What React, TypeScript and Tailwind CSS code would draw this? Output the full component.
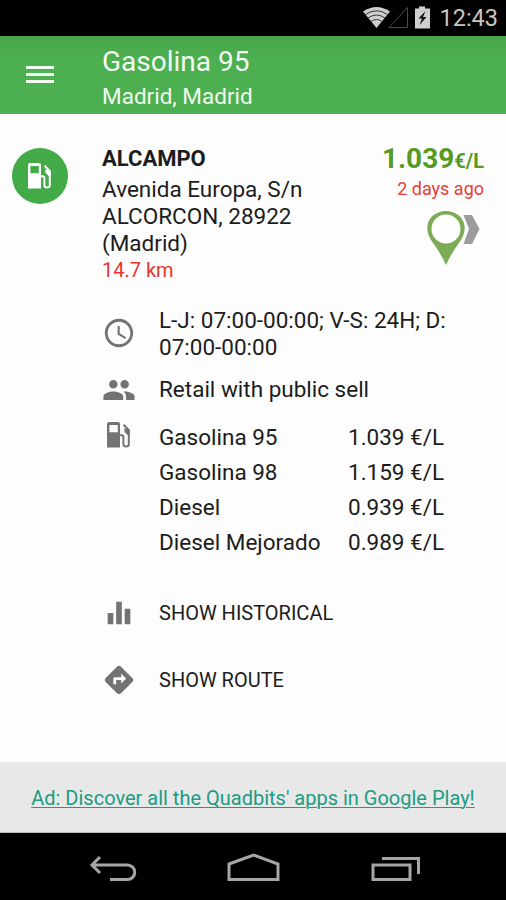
import { ReactNode } from "react";
import { MdPeople, MdSchedule, MdEqualizer, MdDirections } from "react-icons/md";

function Pump({ className }: { className: string }) {
  return (
    <svg viewBox="0 0 24 26" className={className} fill="currentColor">
      <path fillRule="evenodd" d="M2 0H11Q13 0 13 2V25.5H0V2Q0 0 2 0ZM2.4 3V10.2H10.8V3Z" />
      <path d="M13 13.3H14.8Q16.4 13.3 16.4 15V22Q16.4 24.6 19 24.6Q21.8 24.6 21.8 22V8.2L16.6 2.8" fill="none" stroke="currentColor" strokeWidth="2" />
      <path d="M17.2 6.2L22.6 8V13H20.6L17.6 10Z" />
    </svg>
  );
}

function Row({ icon, className, children }: { icon: ReactNode; className: string; children: ReactNode }) {
  return (
    <div className={`flex items-start ${className}`}>
      <div className="flex w-[57px] shrink-0 text-[#737373]">{icon}</div>
      {children}
    </div>
  );
}

const fuels = [
  ["Gasolina 95", "1.039 €/L"],
  ["Gasolina 98", "1.159 €/L"],
  ["Diesel", "0.939 €/L"],
  ["Diesel Mejorado", "0.989 €/L"],
];

export default function App() {
  return (
    <div className="flex h-[900px] w-[506px] flex-col overflow-hidden bg-[#fdfdfd] font-['Roboto',sans-serif] text-[#1c1c1c]">
      <div className="flex h-9 shrink-0 items-center justify-end bg-black pr-2 text-[#c6c6c6]">
        <svg width="72" height="36" viewBox="0 0 72 36" className="mr-[6px]">
          <path d="M2 11.5Q15.500 2.500 29 11.500L15.500 28Z" fill="#cfcfcf" />
          <g fill="none" stroke="#333" strokeWidth="1">
            <path d="M4.500 14.500Q15.500 7 26.500 14.500M7 18Q15.500 12 24 18M10 21.500Q15.500 17.500 21 21.500" />
          </g>
          <path d="M28 27.500H46.500V7.500Z" fill="none" stroke="#4a4a4a" />
          <path d="M54 8.500H58V6.500H64V8.500H69V28.500H54Z" fill="#cfcfcf" />
          <path d="M64.500 11L57.500 18.500H61L58.500 25L65.500 17H62Z" fill="#111" />
        </svg>
        <span className="text-[23.500px] leading-9">12:43</span>
      </div>

      <header className="flex h-[78px] shrink-0 bg-[#4caf50] bg-linear-to-b from-[#48a44b] to-[#4caf50] to-30% text-[#f1faf1]">
        <div className="flex w-[102px] flex-col gap-1 pt-[30px] pl-[26px]">
          <i className="h-[3px] w-[28px] bg-current" />
          <i className="h-[3px] w-[28px] bg-current" />
          <i className="h-[3px] w-[28px] bg-current" />
        </div>
        <div className="pt-2">
          <h1 className="text-[28px] leading-9">Gasolina 95</h1>
          <p className="text-[22.500px] leading-8">Madrid, Madrid</p>
        </div>
      </header>

      <main className="flex h-[648px] shrink-0 flex-col">
        <section className="flex h-[193px] shrink-0 pt-[30px] pr-[22px]">
          <div className="w-[102px] pt-1 pl-3">
            <div className="flex size-14 items-center justify-center rounded-full bg-[#42ab47] text-white">
              <Pump className="h-[26px] w-6" />
            </div>
          </div>
          <div className="flex-1">
            <h2 className="mb-[2px] text-[22px] leading-[30px] font-bold">ALCAMPO</h2>
            <p className="text-[22.500px] leading-[27px]">
              Avenida Europa, S/n
              <br />
              ALCORCON, 28922
              <br />
              (Madrid)
            </p>
            <p className="text-[20px] leading-[27px] text-[#e8352e]">14.7 km</p>
          </div>
          <div className="flex flex-col items-end">
            <p className="text-[28px] leading-[30px] font-bold text-[#559b1f]">
              1.039<span className="text-[20px]">€/L</span>
            </p>
            <p className="text-[18px] leading-[26px] text-[#ec3b35]">2 days ago</p>
            <svg width="58" height="58" viewBox="0 0 58 58" className="mt-[7px]">
              <path d="M37.500 6H46L53.500 20L46 35H37.500L43 20Z" fill="#9c9c9c" />
              <path d="M20 56Q14 43 5 31C-5 14 7 2 20 2S45 14 35 31Q26 43 20 56Z" fill="#7dac57" />
              <circle cx="20" cy="20" r="14.500" fill="white" />
            </svg>
          </div>
        </section>

        <section className="flex flex-col pl-[102px] text-[22.500px]">
          <Row className="h-[69px]" icon={<MdSchedule className="mt-[9px] size-[34px]" />}>
            <p className="leading-[27px]">
              L-J: 07:00-00:00; V-S: 24H; D:
              <br />
              07:00-00:00
            </p>
          </Row>
          <Row className="h-[44px]" icon={<MdPeople className="-mt-[3px] size-[34px]" />}>
            <p className="leading-[27px]">Retail with public sell</p>
          </Row>
          <Row className="h-[170px]" icon={<Pump className="mt-[2px] ml-[5px] h-[26px] w-6" />}>
            <div>
              {fuels.map(([name, price]) => (
                <div key={name} className="flex leading-[35px]">
                  <span className="w-[189px]">{name}</span>
                  <span>{price}</span>
                </div>
              ))}
            </div>
          </Row>
          <Row className="h-[67px] text-[20px]" icon={<MdEqualizer className="mt-[6px] size-[34px]" />}>
            <p className="pt-2 leading-[30px]">SHOW HISTORICAL</p>
          </Row>
          <Row className="h-[60px] text-[20px]" icon={<MdDirections className="mt-[6px] size-[34px]" />}>
            <p className="pt-2 leading-[30px]">SHOW ROUTE</p>
          </Row>
        </section>
      </main>

      <div className="flex h-[71px] shrink-0 justify-center border-b border-[#bbb] bg-[#e8e8e8] pt-[21px]">
        <a className="text-[20px] leading-[30px] text-[#209b83] underline decoration-1 underline-offset-2">Ad: Discover all the Quadbits' apps in Google Play!</a>
      </div>

      <nav className="flex flex-1 bg-black">
        <svg width="506" height="67" viewBox="0 0 506 67" fill="none" stroke="#a6a6a6" strokeWidth="3">
          <path d="M100 24L92 32L100 40M92 32H127.500A7 7 0 0 1 127.500 46.500H110" />
          <path d="M229 31L253.500 22L278 31V46.500H229Z" />
          <path d="M373 32H410V46.500H373ZM382 25.500H418.500V41" />
        </svg>
      </nav>
    </div>
  );
}
